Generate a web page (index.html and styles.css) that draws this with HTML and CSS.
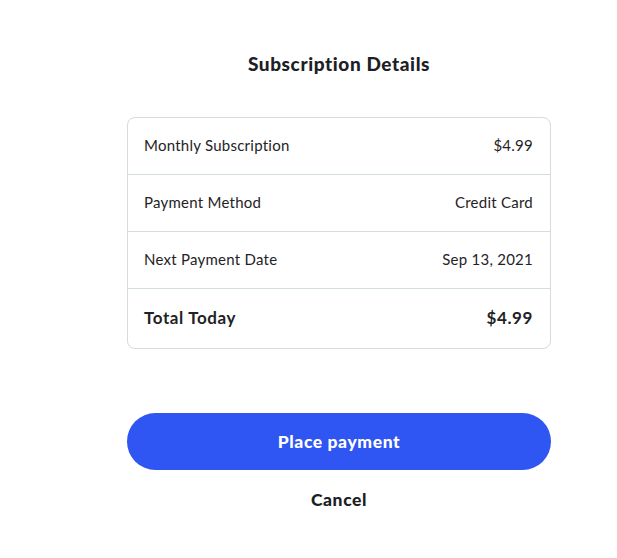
FILE: index.html
```html
<!DOCTYPE html>
<html>
<head>
  <link rel="stylesheet" href="styles.css">
</head>
<body>
  <div class="container">
    <h2 class="title">Subscription Details</h2>

    <div class="details">
      <div class="row">
        <span>Monthly Subscription</span>
        <span>$4.99</span>
      </div>
      <div class="row">
        <span>Payment Method</span>
        <span>Credit Card</span>
      </div>
      <div class="row">
        <span>Next Payment Date</span>
        <span>Sep 13, 2021</span>
      </div>
      <div class="row total">
        <span>Total Today</span>
        <span>$4.99</span>
      </div>
    </div>

    <button class="primary-button">Place payment</button>
    <button class="link-button">Cancel</button>
  </div>
</body>
</html>
```

FILE: styles.css
```css
body {
  font-family: 'Lato', 'Noto Sans', sans-serif;
  margin: 0;
  color: #1f2326;
  background: #fff;
}
.container {
  display: flex;
  flex-direction: column;
  width: 424px;
  margin-left: 127px;
  padding-top: 52px;
}
.title {
  margin: 0;
  font-size: 19px;
  line-height: 24px;
  font-weight: 900;
  letter-spacing: 0.6px;
  text-align: center;
  color: #1c2024;
}
.details {
  margin-top: 41px;
  border: 1px solid #d3dce1;
  border-radius: 8px;
}
.row {
  display: flex;
  justify-content: space-between;
  align-items: center;
  height: 56px;
  padding: 0 17px 0 16px;
  font-size: 15px;
  line-height: 18px;
  letter-spacing: 0.25px;
  border-bottom: 1px solid #d3dce1;
}
.row span {
  margin-top: -2px;
}
.row.total {
  height: 59px;
  border-bottom: none;
  font-size: 17px;
  font-weight: 700;
  letter-spacing: 0.6px;
}
button {
  border: none;
  font-family: inherit;
  font-weight: 900;
  letter-spacing: 0.6px;
  cursor: pointer;
}
.primary-button {
  margin-top: 64px;
  height: 57px;
  border-radius: 29px;
  background-color: #2f55f2;
  color: #fff;
  font-size: 17.5px;
}
.link-button {
  margin-top: 18px;
  height: 20px;
  background: none;
  color: #1c2024;
  font-size: 17.5px;
}
```
